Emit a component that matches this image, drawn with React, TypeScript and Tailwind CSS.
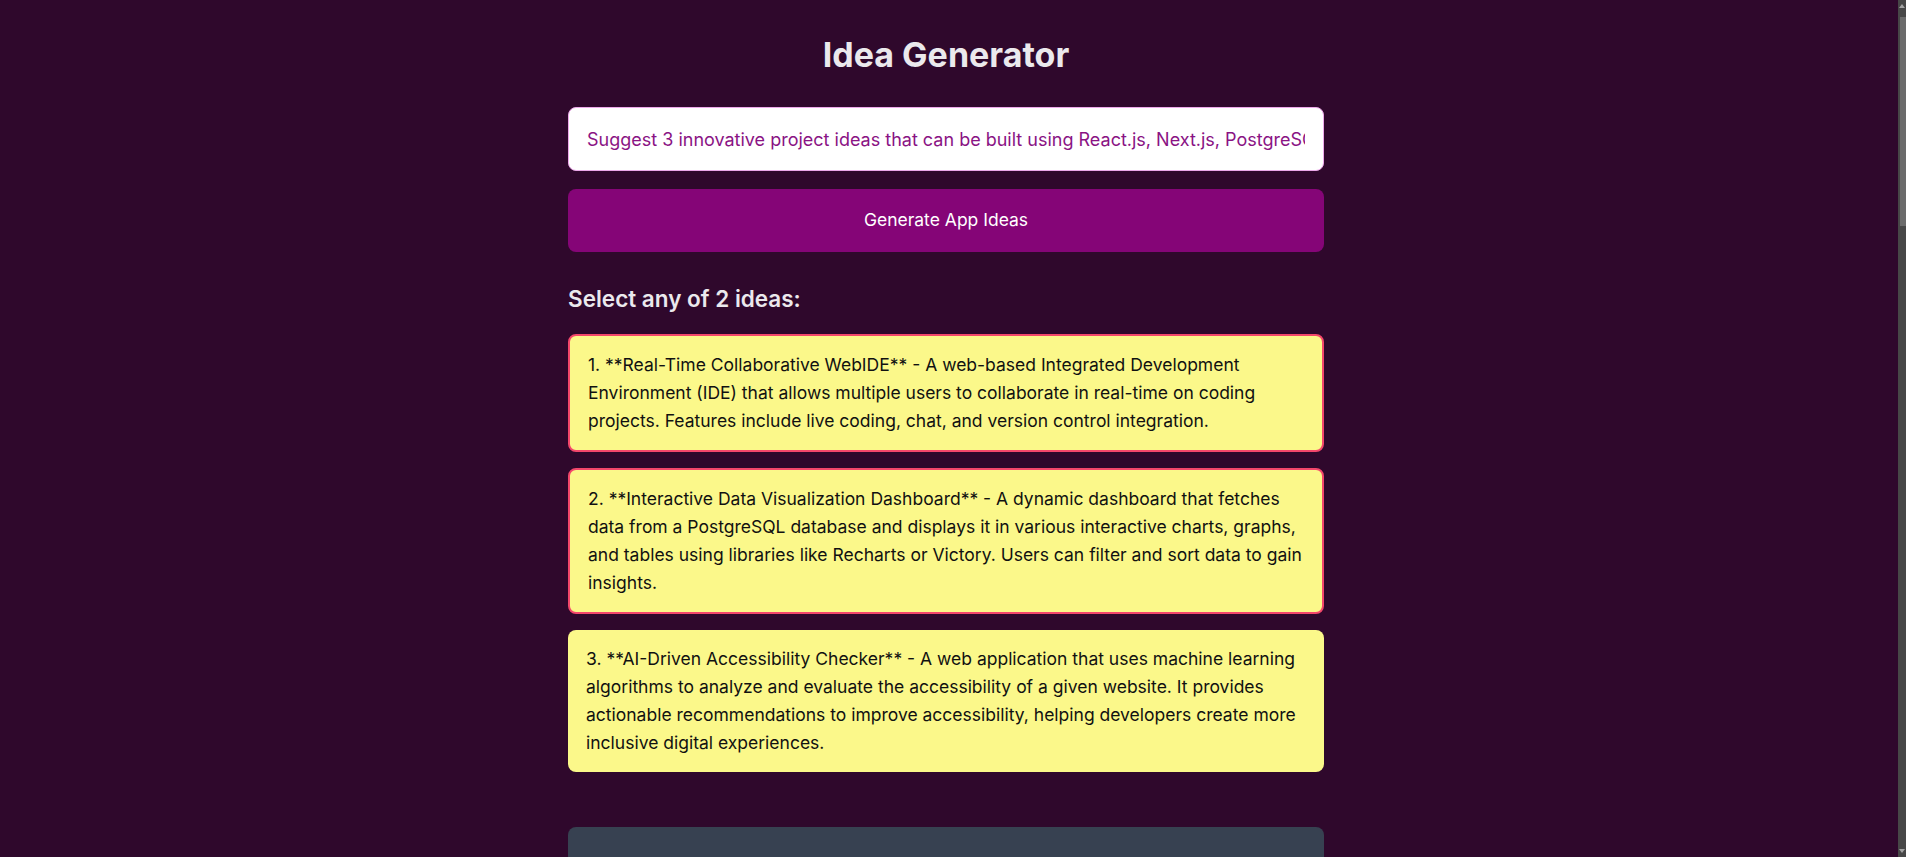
import * as React from 'react'

const PROMPT =
  'Suggest 3 innovative project ideas that can be built using React.js, Next.js, PostgreSQL and Tailwind CSS. Keep each idea short and practical.'

interface Idea {
  id: number
  text: string
  selected: boolean
}

const IDEAS: Idea[] = [
  {
    id: 1,
    text: '1. **Real-Time Collaborative WebIDE** - A web-based Integrated Development Environment (IDE) that allows multiple users to collaborate in real-time on coding projects. Features include live coding, chat, and version control integration.',
    selected: true,
  },
  {
    id: 2,
    text: '2. **Interactive Data Visualization Dashboard** - A dynamic dashboard that fetches data from a PostgreSQL database and displays it in various interactive charts, graphs, and tables using libraries like Recharts or Victory. Users can filter and sort data to gain insights.',
    selected: true,
  },
  {
    id: 3,
    text: '3. **AI-Driven Accessibility Checker** - A web application that uses machine learning algorithms to analyze and evaluate the accessibility of a given website. It provides actionable recommendations to improve accessibility, helping developers create more inclusive digital experiences.',
    selected: false,
  },
]

export default function App() {
  const [prompt, setPrompt] = React.useState(PROMPT)
  const [ideas, setIdeas] = React.useState(IDEAS)

  const picked = ideas.filter((idea) => idea.selected).length

  function toggle(id: number) {
    setIdeas((current) =>
      current.map((idea) => (idea.id === id ? { ...idea, selected: !idea.selected } : idea)),
    )
  }

  return (
    <div className="flex h-screen bg-[#2f082c] font-['Inter',sans-serif]">
      <main className="min-w-0 flex-1 overflow-y-auto [scrollbar-width:none]">
        <div className="pr-1.5 pb-14">
          <div className="mx-auto w-[756px] pt-[35px]">
            <h1 className="text-center text-[34px] font-bold leading-10 text-[#ebe9ed]">
              Idea Generator
            </h1>

            <input
              value={prompt}
              onChange={(event) => setPrompt(event.target.value)}
              className="mt-[32px] block h-16 w-full rounded-lg border border-[#eca8ea] bg-white px-[18px] text-[18px] text-[#8a1384] outline-none"
            />

            <button
              type="button"
              className="mt-[18px] block h-[63px] w-full rounded-lg bg-[#850577] text-[17.5px] text-white"
            >
              Generate App Ideas
            </button>

            <h2 className="mt-[33px] text-[22.5px] font-semibold leading-7 text-[#ebe9ed]">
              Select any of {picked} ideas:
            </h2>

            <ul className="mt-[21px] flex flex-col gap-4">
              {ideas.map((idea) => (
                <li
                  key={idea.id}
                  onClick={() => toggle(idea.id)}
                  className={
                    idea.selected
                      ? 'cursor-pointer rounded-lg border-2 border-[#f4476b] bg-[#fbf88a] px-[18px] py-[15px] text-[17.5px] leading-7 text-[#111]'
                      : 'cursor-pointer rounded-lg bg-[#fbf88a] px-[18px] py-[15px] text-[17.5px] leading-7 text-[#111]'
                  }
                >
                  {idea.text}
                </li>
              ))}
            </ul>

            <div className="mt-[55px] h-[2500px] rounded-lg bg-[#374151]" />
          </div>
        </div>
      </main>

      {/* the window scrollbar, as it shows in the capture */}
      <aside className="flex w-2 flex-col bg-[#474747] py-1">
        <div className="mx-auto size-0 border-x-[3px] border-b-[4px] border-x-transparent border-b-[#a3a3a3]" />
        <div className="mt-[9px] ml-0.5 h-[209px] bg-[#6b6b6b]" />
        <div className="flex-1" />
        <div className="mx-auto size-0 border-x-[3px] border-t-[4px] border-x-transparent border-t-[#a3a3a3]" />
      </aside>
    </div>
  )
}
